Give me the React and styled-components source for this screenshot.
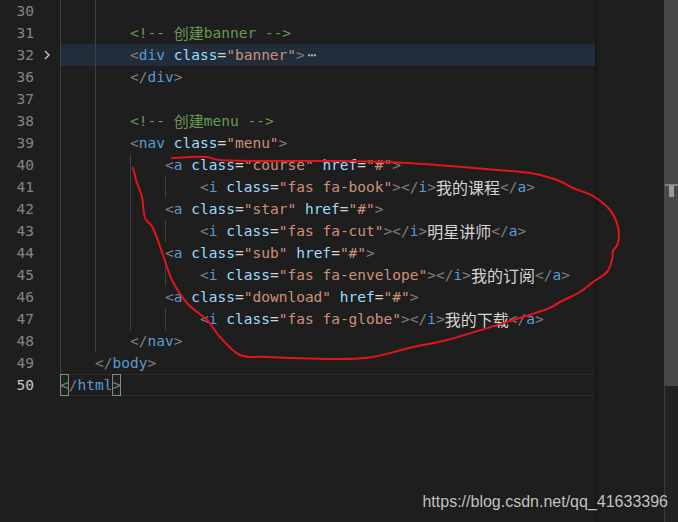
import React from 'react';
import styled, { createGlobalStyle } from 'styled-components';

const GlobalStyle = createGlobalStyle`
  html, body {
    margin: 0;
    padding: 0;
    background: #1e1e1e;
  }
  #root {
    width: 678px;
    height: 522px;
    overflow: hidden;
  }
`;

const colors = {
  p: '#808080',
  tag: '#569cd6',
  attr: '#9cdcfe',
  str: '#ce9178',
  txt: '#d4d4d4',
  com: '#6a9955',
};

const Window = styled.div`
  position: relative;
  display: flex;
  width: 678px;
  height: 522px;
  background: #1e1e1e;
  font-family: "DejaVu Sans Mono", "Liberation Mono", "Noto Sans CJK SC", monospace;
  font-size: 14.53px;
  overflow: hidden;
`;

const Lines = styled.div`
  width: 595px;
  flex-shrink: 0;
  display: flex;
  flex-direction: column;
`;

const Row = styled.div`
  display: flex;
  height: 22px;
  line-height: 22px;
`;

const Gutter = styled.div`
  width: 60px;
  flex-shrink: 0;
  display: flex;
`;

const LineNo = styled.span`
  width: 34px;
  text-align: right;
  color: ${(p) => (p.$active ? '#c6c6c6' : '#858585')};
`;

const Fold = styled.span`
  width: 26px;
  display: flex;
  align-items: center;
  justify-content: center;
`;

const Code = styled.div`
  flex: 1;
  height: 22px;
  white-space: pre;
  color: #d4d4d4;
  background: ${(p) => (p.$folded ? '#212d3a' : 'transparent')};
  box-shadow: ${(p) =>
    p.$current ? 'inset 0 1px #2a2a2a, inset 0 -1px #2a2a2a' : 'none'};
`;

const Guide = styled.span`
  display: inline-block;
  width: 35px;
  height: 22px;
  vertical-align: top;
  box-shadow: inset 1px 0 #404040;
`;

const Tok = styled.span`
  color: ${(p) => colors[p.$k]};
`;

const Han = styled.span`
  display: inline-block;
  height: 22px;
  vertical-align: top;
  line-height: 22px;
  font-family: "Noto Sans CJK SC", sans-serif;
  font-size: ${(p) => p.$size}px;
  color: ${(p) => colors[p.$k]};
`;

const Ellipsis = styled.span`
  margin-left: 3px;
  color: #bbbbbb;
`;

const Match = styled.span`
  display: inline-block;
  width: 8.75px;
  height: 22px;
  box-sizing: border-box;
  vertical-align: top;
  line-height: 20px;
  border: 1px solid #888888;
  background: rgba(0, 100, 0, 0.12);
  color: #808080;
  text-indent: -1px;
`;

const Minimap = styled.div`
  width: 69px;
  flex-shrink: 0;
  background: #1e1e1e;
  box-shadow: inset 1px 0 #151515, inset 4px 0 4px -3px rgba(0, 0, 0, 0.35);
`;

const Scrollbar = styled.div`
  position: relative;
  width: 14px;
  flex-shrink: 0;
  background: #222222;
  box-shadow: inset 1px 0 #3a3a3a;
`;

const Slider = styled.div`
  height: 386px;
  background: #484848;
`;

const RulerLine = styled.div`
  position: absolute;
  left: 1px;
  right: 0;
  top: 184px;
  height: 2px;
  background: #808080;
`;

const RulerMark = styled.div`
  position: absolute;
  left: 5px;
  top: 185px;
  width: 5px;
  height: 12px;
  background: #9a9a9a;
`;

const Scribble = styled.svg`
  position: absolute;
  left: 0;
  top: 0;
  pointer-events: none;
`;

const Watermark = styled.div`
  position: absolute;
  right: 10px;
  top: 493px;
  font-family: "Liberation Sans", Arial, sans-serif;
  font-size: 16px;
  color: #c4c4c4;
  text-shadow: 0 0 1px rgba(0, 0, 0, 0.6);
`;

const open = (name, attrs = []) => [
  ['p', '<'],
  ['tag', name],
  ...attrs.flatMap(([k, v]) => [
    ['txt', ' '],
    ['attr', k],
    ['txt', '='],
    ['str', `"${v}"`],
  ]),
  ['p', '>'],
];
const close = (name) => [['p', '</'], ['tag', name], ['p', '>']];
const item = (icon, label) => [
  ...open('i', [['class', `fas ${icon}`]]),
  ...close('i'),
  ['han', label],
  ...close('a'),
];
const comment = (word) => [['com', '<!-- '], ['comhan', '创建'], ['com', `${word} -->`]];

const lines = [
  { n: 30, indent: 2, toks: [] },
  { n: 31, indent: 2, toks: comment('banner') },
  { n: 32, indent: 2, toks: open('div', [['class', 'banner']]), folded: true },
  { n: 36, indent: 2, toks: close('div') },
  { n: 37, indent: 2, toks: [] },
  { n: 38, indent: 2, toks: comment('menu') },
  { n: 39, indent: 2, toks: open('nav', [['class', 'menu']]) },
  { n: 40, indent: 3, toks: open('a', [['class', 'course'], ['href', '#']]) },
  { n: 41, indent: 4, toks: item('fa-book', '我的课程') },
  { n: 42, indent: 3, toks: open('a', [['class', 'star'], ['href', '#']]) },
  { n: 43, indent: 4, toks: item('fa-cut', '明星讲师') },
  { n: 44, indent: 3, toks: open('a', [['class', 'sub'], ['href', '#']]) },
  { n: 45, indent: 4, toks: item('fa-envelope', '我的订阅') },
  { n: 46, indent: 3, toks: open('a', [['class', 'download'], ['href', '#']]) },
  { n: 47, indent: 4, toks: item('fa-globe', '我的下载') },
  { n: 48, indent: 2, toks: close('nav') },
  { n: 49, indent: 1, toks: close('body') },
  {
    n: 50,
    indent: 0,
    toks: [['match', '<'], ['p', '/'], ['tag', 'html'], ['match', '>']],
    current: true,
  },
];

const renderTok = ([k, v], i) => {
  if (k === 'han') return <Han key={i} $k="txt" $size={16}>{v}</Han>;
  if (k === 'comhan') return <Han key={i} $k="com" $size={15}>{v}</Han>;
  if (k === 'match') return <Match key={i}>{v}</Match>;
  return <Tok key={i} $k={k}>{v}</Tok>;
};

const redPoints = [
  [172, 158], [190, 157], [207, 157], [220, 160], [260, 161], [340, 161],
  [407, 163], [473, 168], [530, 173], [557, 180], [573, 188], [593, 196],
  [610, 210], [618, 227], [618, 243], [613, 251], [612, 260], [607, 272],
  [593, 282], [580, 292], [560, 302], [547, 309], [507, 322], [447, 340],
  [413, 347], [373, 357], [340, 359], [267, 357], [240, 355], [220, 337],
  [207, 320], [187, 303], [172, 280], [164, 258], [153, 228], [145, 218],
  [142, 197], [137, 183], [133, 168],
];

// catmull-rom through the sampled points
const smoothPath = (pts) => {
  let d = `M${pts[0][0]} ${pts[0][1]}`;
  for (let i = 0; i < pts.length - 1; i++) {
    const p0 = pts[i - 1] || pts[i];
    const p1 = pts[i];
    const p2 = pts[i + 1];
    const p3 = pts[i + 2] || p2;
    const c1 = [p1[0] + (p2[0] - p0[0]) / 6, p1[1] + (p2[1] - p0[1]) / 6];
    const c2 = [p2[0] - (p3[0] - p1[0]) / 6, p2[1] - (p3[1] - p1[1]) / 6];
    d += ` C${c1[0].toFixed(1)} ${c1[1].toFixed(1)} ${c2[0].toFixed(1)} ${c2[1].toFixed(1)} ${p2[0]} ${p2[1]}`;
  }
  return d;
};

const Chevron = () => (
  <svg width="8" height="10" viewBox="0 0 8 10">
    <path d="M2 1 L6 5 L2 9" fill="none" stroke="#c5c5c5" strokeWidth="1.4" />
  </svg>
);

export default function App() {
  return (
    <>
      <GlobalStyle />
      <Window>
        <Lines>
          {lines.map((line) => (
            <Row key={line.n}>
              <Gutter>
                <LineNo $active={line.current}>{line.n}</LineNo>
                <Fold>{line.folded && <Chevron />}</Fold>
              </Gutter>
              <Code $folded={line.folded} $current={line.current}>
                {Array.from({ length: line.indent }, (_, i) => (
                  <Guide key={`g${i}`} />
                ))}
                {line.toks.map(renderTok)}
                {line.folded && <Ellipsis>⋯</Ellipsis>}
              </Code>
            </Row>
          ))}
        </Lines>
        <Minimap />
        <Scrollbar>
          <Slider />
          <RulerLine />
          <RulerMark />
        </Scrollbar>
        <Scribble width="678" height="522" viewBox="0 0 678 522">
          <path
            d={smoothPath(redPoints)}
            fill="none"
            stroke="#e3141c"
            strokeWidth="2"
            strokeLinecap="round"
            strokeLinejoin="round"
          />
        </Scribble>
        <Watermark>https://blog.csdn.net/qq_41633396</Watermark>
      </Window>
    </>
  );
}
